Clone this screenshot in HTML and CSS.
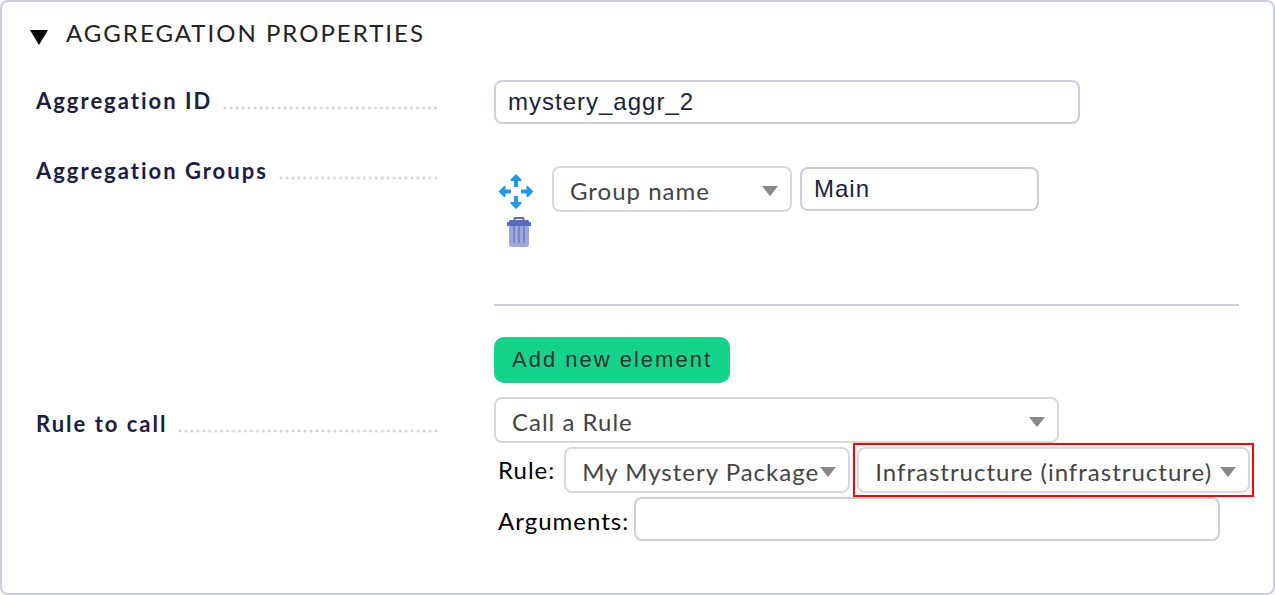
FILE: index.html
```
<!DOCTYPE html>
<html lang="en">
<head>
<meta charset="utf-8">
<meta name="viewport" content="width=device-width, initial-scale=1">
<title>Aggregation properties</title>
<link rel="stylesheet" href="styles.css">
</head>
<body>
<form class="panel">
  <h2 class="panel-title">
    <svg class="toggle" viewBox="0 0 18 15" aria-hidden="true"><path d="M0 0H18L9 15Z"/></svg>
    Aggregation properties
  </h2>
  <div class="row">
    <label class="legend" for="aggr-id">Aggregation ID</label>
    <div class="value"><input class="text wide" id="aggr-id" type="text" value="mystery_aggr_2"></div>
  </div>
  <div class="row groups">
    <div class="legend">Aggregation Groups</div>
    <div class="value">
      <div class="element">
        <div class="tools">
          <button class="icon-button" type="button" aria-label="Move this entry">
            <svg class="move" viewBox="0 0 36 36" aria-hidden="true"><path d="M18 0L23.500 5.500V7H20V13H16V7H12.500V5.500ZM18 35L23.500 29.500V28H20V22H16V28H12.500V29.500ZM.5 17.500L6 12H7.500V15.500H13V19.500H7.500V23H6ZM35.500 17.500L30 12H28.500V15.500H23V19.500H28.500V23H30Z"/></svg>
          </button>
          <button class="icon-button" type="button" aria-label="Delete this entry">
            <svg class="trash" viewBox="0 0 24 30" aria-hidden="true">
              <path class="bin" d="M2 8H22V27Q22 30 19 30H5Q2 30 2 27Z"/>
              <path class="ribs" d="M7 9V26M12 9V26M17 9V26"/>
              <path class="lid" d="M3 3H21Q22 3 22 5H24V9H0V5H2Q2 3 3 3Z"/>
              <path class="handle" d="M7.500 4V1.500Q7.500 1 8 1H16Q16.500 1 16.500 1.500V4"/>
            </svg>
          </button>
        </div>
        <span class="select"><select class="criterion" aria-label="Group criterion"><option>Group name</option></select></span>
        <input class="text" type="text" aria-label="Group name" value="Main">
      </div>
      <button class="add" type="button">Add new element</button>
    </div>
  </div>
  <div class="row rule">
    <label class="legend" for="rule-mode">Rule to call</label>
    <div class="value">
      <span class="select"><select class="mode" id="rule-mode"><option>Call a Rule</option></select></span>
      <div class="line">
        <label for="package">Rule:</label>
        <span class="select"><select class="package" id="package"><option>My Mystery Package</option></select></span>
        <span class="highlight"><span class="select"><select class="infra" aria-label="Rule"><option>Infrastructure (infrastructure)</option></select></span></span>
      </div>
      <div class="line arguments">
        <label for="arguments">Arguments:</label>
        <input class="text wide" id="arguments" type="text">
      </div>
    </div>
  </div>
</form>
</body>
</html>
```
FILE: styles.css
```
* { box-sizing: border-box; }

body {
  margin: 0;
  background: #fff;
  color: #000;
  font: 24px/28px Lato, sans-serif;
  letter-spacing: 1px;
}

.panel {
  min-height: 100vh;
  padding: 17px 20px 20px 34px;
  border: 2px solid #cccddd;
  border-radius: 8px;
}

.panel-title {
  display: flex;
  align-items: center;
  gap: 18px;
  margin: 0 0 33px -6px;
  color: #222;
  font-size: 24px;
  font-weight: 400;
  letter-spacing: 2px;
  text-transform: uppercase;
}

.toggle { width: 18px; height: 15px; margin-top: 8px; }

.row {
  display: grid;
  grid-template-columns: 403px minmax(0, 1fr);
  column-gap: 55px;
}

.legend {
  display: flex;
  gap: 10px;
  height: 28px;
  margin-top: 7px;
  color: #1a2040;
  font-size: 22px;
  font-weight: 700;
  letter-spacing: 2px;
}

.legend::after {
  content: "";
  flex: 1;
  height: 23px;
  background: radial-gradient(circle, #d6d6d6 1px, transparent 2px) left bottom / 6px 4px;
  background-repeat: round no-repeat;
}

.groups { margin-top: 42px; }
.groups .legend { margin-top: -9px; }
.rule { margin-top: 14px; }
.rule .legend { margin-top: 13px; }

.text {
  width: 239px;
  height: 44px;
  padding: 0 12px;
  border: 2px solid #cccddd;
  border-radius: 8px;
  background: #fff;
  color: #1a1f3c;
  font: 24px "Liberation Sans", Arial, sans-serif;
  letter-spacing: 1px;
}

.wide { width: 586px; max-width: 100%; }

.value { min-width: 0; }

.element {
  display: flex;
  align-items: flex-start;
  gap: 8px;
  width: 745px;
  max-width: 100%;
  height: 140px;
  margin-bottom: 31px;
  border-bottom: 2px solid #cccddd;
}

.element .text { margin-top: 1px; }

.tools {
  display: flex;
  flex-direction: column;
  align-items: center;
  gap: 7px;
  width: 50px;
  padding-top: 8px;
}

.icon-button {
  display: block;
  padding: 0;
  border: 0;
  background: none;
  line-height: 0;
}

.move { width: 36px; height: 36px; margin-right: 6px; fill: #2196f3; }
.trash { width: 24px; height: 30px; }
.bin { fill: #9fa8da; }
.ribs { fill: none; stroke: #7986cb; stroke-width: 2; }
.lid { fill: #5c6bc0; }
.handle { fill: none; stroke: #5c6bc0; stroke-width: 2; }

.select { position: relative; display: inline-block; vertical-align: top; }

.select::after {
  content: "";
  position: absolute;
  top: 20px;
  right: 14px;
  border: 8px solid transparent;
  border-top: 10px solid #888;
  border-bottom: 0;
  pointer-events: none;
}

select {
  display: block;
  width: 100%;
  height: 46px;
  padding: 2px 0 0 16px;
  border: 2px solid #d9d9d9;
  border-radius: 8px;
  appearance: none;
  background: #fff;
  color: #444;
  font: 24px Lato, sans-serif;
  letter-spacing: 1px;
}

.criterion { width: 240px; }
.mode { width: 565px; }
.package { width: 286px; }
.infra { width: 393px; }

.add {
  display: block;
  height: 46px;
  padding: 0 18px;
  border: 0;
  border-radius: 10px;
  background: #15d38a;
  color: #333;
  font: 22px "Liberation Sans", Arial, sans-serif;
  letter-spacing: 2px;
}

.line {
  display: flex;
  align-items: center;
  padding-left: 4px;
}

.line label { margin-right: 9px; }

.highlight {
  display: flex;
  margin-left: 3px;
  padding: 2px;
  border: 2px solid #f00;
}

.arguments label { margin: 4px 5px 0 0; }
```
